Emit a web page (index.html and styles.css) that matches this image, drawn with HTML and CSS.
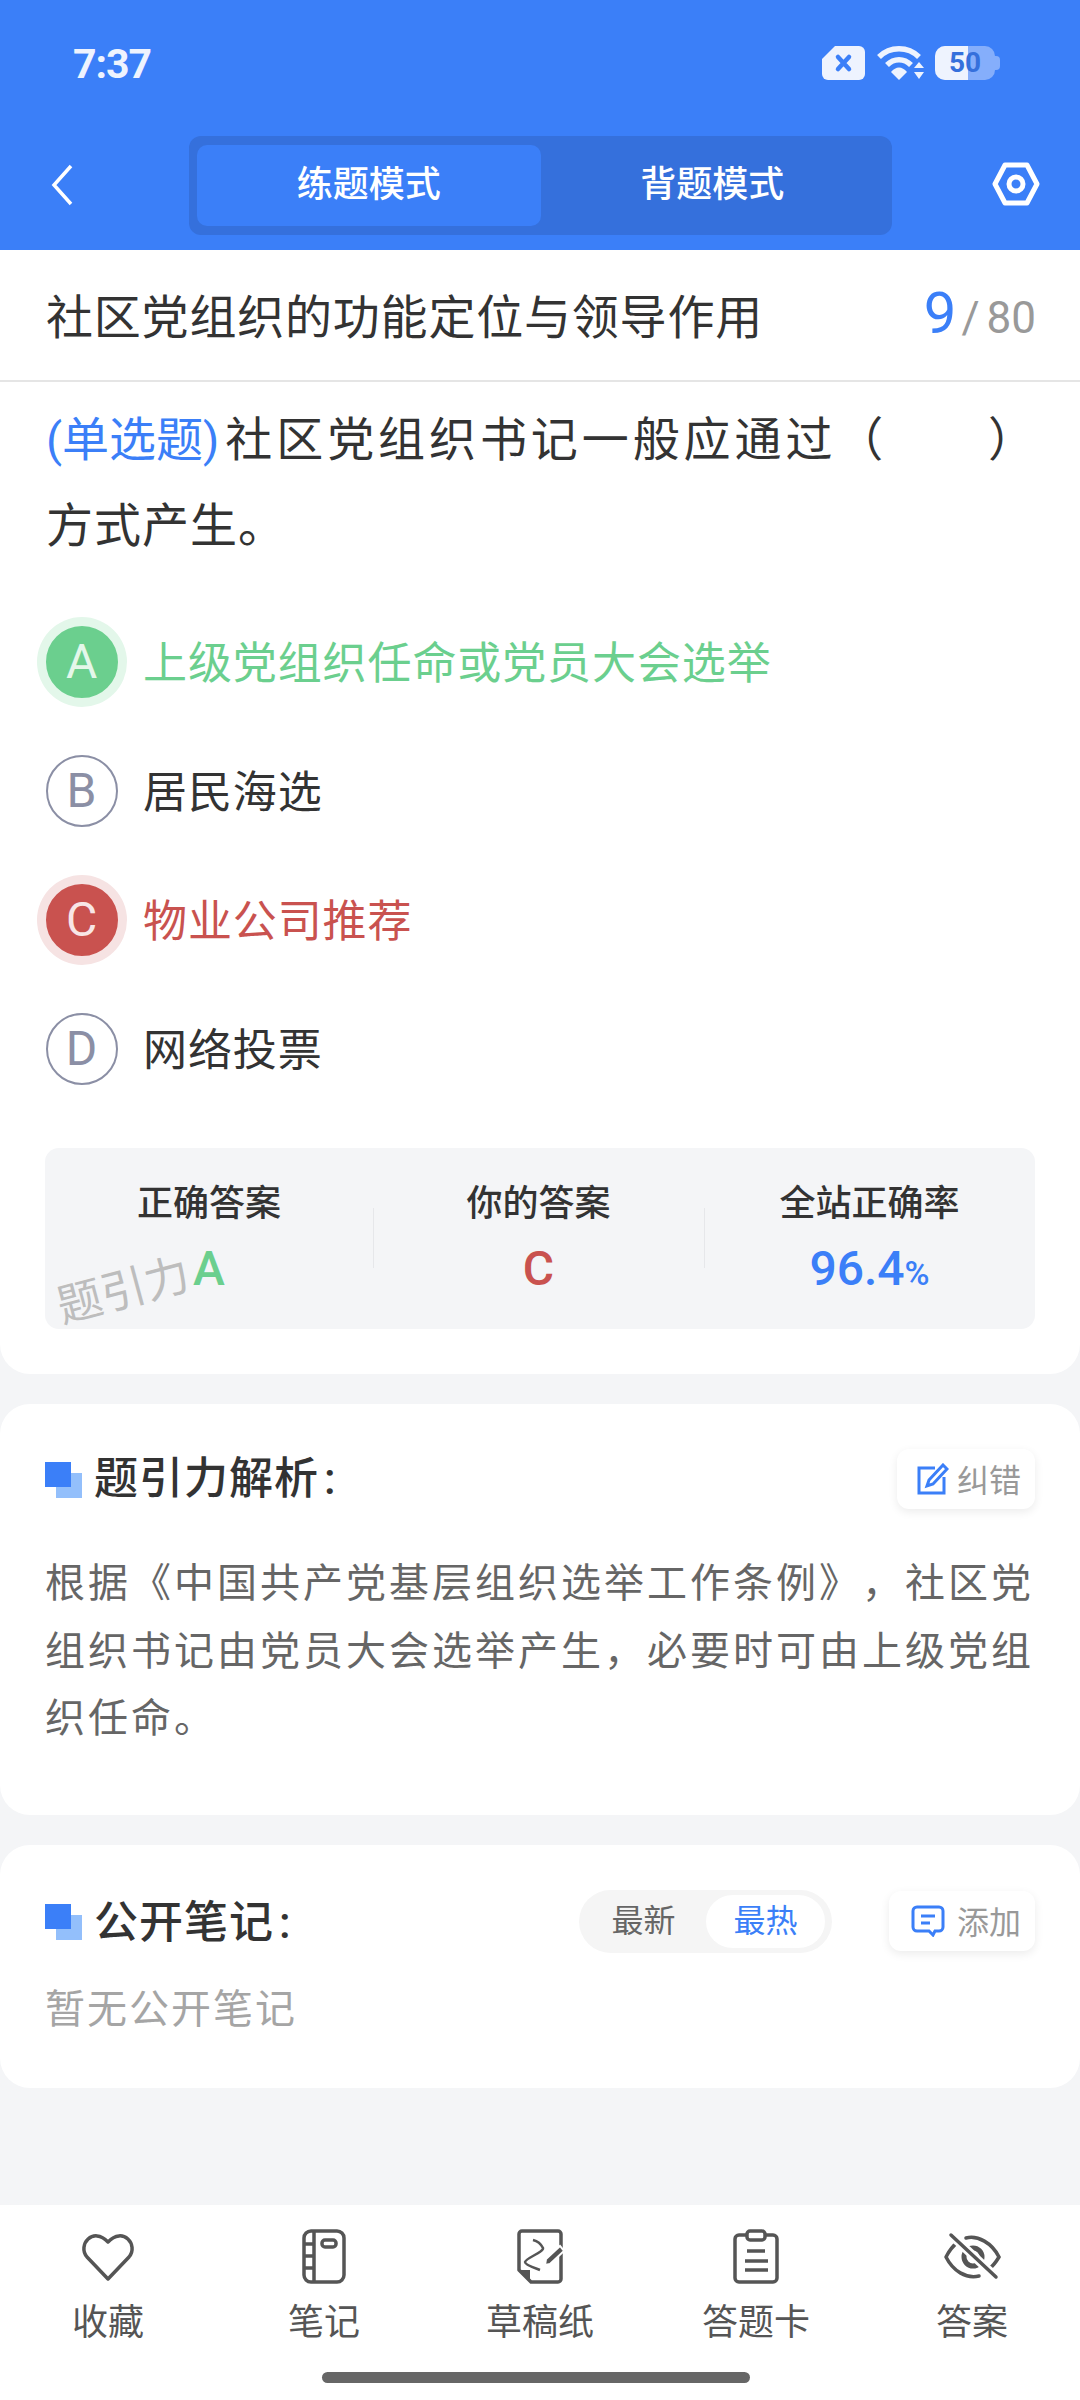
FILE: index.html
```html
<!DOCTYPE html>
<html>
    <head>
        <title>练题模式</title>
        <link rel="stylesheet" href="styles.css">
    </head>
    <body>
        <header class="header">
            <div class="status">
                <span class="time">7:37</span>
                <div class="status-icons">
                    <svg width="43" height="34" viewBox="0 0 43 34"><path d="M13 0H37a6 6 0 0 1 6 6V28a6 6 0 0 1-6 6H6a6 6 0 0 1-6-6V13z" fill="#eef3fe"/><path d="M16 11l11 12M27 11L16 23" stroke="#3b7ff8" stroke-width="4.5" stroke-linecap="round"/></svg>
                    <svg width="48" height="34" viewBox="0 0 48 34"><path d="M3 11C14 0 32 0 43 11" fill="none" stroke="#eef3fe" stroke-width="5.5"/><path d="M11 19c7-7 17-7 24 0" fill="none" stroke="#eef3fe" stroke-width="5.5"/><path d="M15 26c5-6 11-6 16 0l-8 8z" fill="#eef3fe"/><path d="M38 22l5-6 5 6zM38 26l5 7 5-7z" fill="#eef3fe"/></svg>
                    <div class="battery"><div class="battery-fill"></div><span class="battery-num">50</span></div>
                </div>
            </div>
            <div class="nav">
                <svg class="back" width="22" height="42" viewBox="0 0 22 42"><path d="M20 2L3 21l17 19" fill="none" stroke="#fff" stroke-width="3.5"/></svg>
                <div class="tabs">
                    <div class="tab active">练题模式</div>
                    <div class="tab">背题模式</div>
                </div>
                <svg class="hex" width="48" height="44" viewBox="0 0 48 44"><path d="M13 3H35L45 22 35 41H13L3 22z" fill="none" stroke="#fff" stroke-width="5" stroke-linejoin="round"/><circle cx="24" cy="22" r="7" fill="none" stroke="#fff" stroke-width="5"/></svg>
            </div>
        </header>

        <section class="card question-card">
            <div class="title-row">
                <span class="title">社区党组织的功能定位与领导作用</span>
                <span class="progress"><b>9</b><i>/</i>80</span>
            </div>
            <p class="question"><span class="qtype">(单选题)</span>社区党组织书记一般应通过（&emsp;&emsp;）方式产生。</p>
            <div class="options">
                <div class="option right"><span class="letter">A</span><span class="option-text">上级党组织任命或党员大会选举</span></div>
                <div class="option"><span class="letter">B</span><span class="option-text">居民海选</span></div>
                <div class="option wrong"><span class="letter">C</span><span class="option-text">物业公司推荐</span></div>
                <div class="option"><span class="letter">D</span><span class="option-text">网络投票</span></div>
            </div>
            <div class="stats">
                <div class="stat"><div class="stat-label">正确答案</div><div class="stat-value green">A</div></div>
                <div class="stat"><div class="stat-label">你的答案</div><div class="stat-value red">C</div></div>
                <div class="stat"><div class="stat-label">全站正确率</div><div class="stat-value blue">96.4<small>%</small></div></div>
                <div class="watermark">题引力</div>
            </div>
        </section>

        <section class="card analysis-card">
            <div class="card-head">
                <h3 class="heading"><span class="marker"></span>题引力解析<span class="colon">:</span></h3>
                <div class="pill-btn fix-btn">
                    <svg width="32" height="32" viewBox="0 0 32 32"><path d="M18 5H2V30H27V14" fill="none" stroke="#3b7ff8" stroke-width="3"/><path d="M26 2l4 4L16 21l-6 2 2-6z" fill="none" stroke="#3b7ff8" stroke-width="3"/></svg>
                    <span>纠错</span>
                </div>
            </div>
            <p class="analysis">根据《中国共产党基层组织选举工作条例》，社区党组织书记由党员大会选举产生，必要时可由上级党组织任命。</p>
        </section>

        <section class="card notes-card">
            <div class="card-head">
                <h3 class="heading"><span class="marker"></span>公开笔记<span class="colon">:</span></h3>
                <div class="head-right">
                    <div class="toggle">
                        <span class="toggle-item">最新</span>
                        <span class="toggle-item on">最热</span>
                    </div>
                    <div class="pill-btn add-btn">
                        <svg width="34" height="32" viewBox="0 0 34 32"><path d="M6 2H28a4 4 0 0 1 4 4V22a4 4 0 0 1-4 4H24l-2 4-4-4H6a4 4 0 0 1-4-4V6a4 4 0 0 1 4-4z" fill="none" stroke="#3b7ff8" stroke-width="3"/><path d="M10 11H24M10 18H19" stroke="#3b7ff8" stroke-width="3"/></svg>
                        <span>添加</span>
                    </div>
                </div>
            </div>
            <p class="empty">暂无公开笔记</p>
        </section>

        <nav class="bottom">
            <div class="bottom-item">
                <svg width="60" height="56" viewBox="0 0 60 56"><path d="M30 50L9 28C-1 16 15-3 30 13 45-3 61 16 51 28z" fill="none" stroke="#555" stroke-width="3.5" stroke-linejoin="round"/></svg>
                <span>收藏</span>
            </div>
            <div class="bottom-item">
                <svg width="60" height="56" viewBox="0 0 60 56"><rect x="10" y="2" width="40" height="51" rx="7" fill="none" stroke="#555" stroke-width="3.5"/><path d="M20 2V53M10 15H20M10 27H20M10 39H20" fill="none" stroke="#555" stroke-width="3.5"/><rect x="28" y="11" width="14" height="7" rx="3" fill="none" stroke="#555" stroke-width="3.5"/></svg>
                <span>笔记</span>
            </div>
            <div class="bottom-item">
                <svg width="60" height="56" viewBox="0 0 60 56"><path d="M12 2H48a3 3 0 0 1 3 3V50a3 3 0 0 1-3 3H21L9 41V5a3 3 0 0 1 3-3z" fill="none" stroke="#555" stroke-width="3.5" stroke-linejoin="round"/><path d="M10 41h10v11z" fill="#555"/><path d="M23 11c4 1 8 4 10 8 1 4-17 10-18 14 0 3 10 6 15 8" fill="none" stroke="#555" stroke-width="2.5"/><path d="M36 30L50 17l4 5-14 13-5 1z" fill="#555" stroke="#fff" stroke-width="2"/></svg>
                <span>草稿纸</span>
            </div>
            <div class="bottom-item">
                <svg width="60" height="56" viewBox="0 0 60 56"><path d="M21 6H13a4 4 0 0 0-4 4V49a4 4 0 0 0 4 4H47a4 4 0 0 0 4-4V10a4 4 0 0 0-4-4H39" fill="none" stroke="#555" stroke-width="3.5"/><rect x="21" y="2" width="18" height="9" rx="3" fill="none" stroke="#555" stroke-width="3.5"/><path d="M21 22H39M19 32H42M19 41H42" stroke="#555" stroke-width="3.5"/></svg>
                <span>答题卡</span>
            </div>
            <div class="bottom-item">
                <svg width="60" height="56" viewBox="0 0 60 56"><path d="M4 28C8 20 12 16 16 13M24 9C36 6 50 14 57 28 54 33 51 37 47 40M37 47C24 50 11 42 4 28" fill="none" stroke="#555" stroke-width="3.5" stroke-linecap="round"/><circle cx="31" cy="28" r="9" fill="none" stroke="#555" stroke-width="5"/><path d="M9 6L54 48" stroke="#fff" stroke-width="9"/><path d="M9 6L54 48" stroke="#555" stroke-width="3.5" stroke-linecap="round"/></svg>
                <span>答案</span>
            </div>
            <div class="home-bar"></div>
        </nav>
    </body>
</html>
```

FILE: styles.css
```css
* {
    box-sizing: border-box;
}
body {
    width: 1080px;
    height: 2400px;
    margin: 0;
    overflow: hidden;
    display: flex;
    flex-direction: column;
    background-color: #f4f5f7;
    color: #333;
    font-family: Roboto, "Noto Sans CJK SC", sans-serif;
    text-spacing-trim: space-all;
}
p, h3 {
    margin: 0;
}

/* header */
.header {
    height: 250px;
    background-color: #3b7ff8;
    color: #fff;
}
.status {
    height: 136px;
    padding: 46px 85px 0 73px;
    display: flex;
    justify-content: space-between;
    align-items: flex-start;
}
.time {
    margin-top: 1px;
    font-size: 41px;
    line-height: 34px;
    font-weight: 700;
    letter-spacing: -1px;
    color: #eef3fe;
}
.status-icons {
    display: flex;
    gap: 11px;
}
.battery {
    position: relative;
    width: 60px;
    height: 34px;
    border-radius: 10px;
    background-color: #85aefb;
    text-align: center;
}
.battery::after {
    content: "";
    position: absolute;
    right: -5px;
    top: 10px;
    width: 5px;
    height: 14px;
    border-radius: 0 4px 4px 0;
    background-color: #85aefb;
}
.battery-fill {
    position: absolute;
    left: 0;
    top: 0;
    width: 33px;
    height: 34px;
    border-radius: 10px 0 0 10px;
    background-color: #eef3fe;
}
.battery-num {
    position: relative;
    display: block;
    font-size: 28px;
    line-height: 34px;
    font-weight: 700;
    color: #3570dc;
}
.nav {
    height: 114px;
    padding-left: 51px;
    display: flex;
    align-items: center;
}
.back {
    margin-top: -17px;
}
.tabs {
    width: 703px;
    height: 99px;
    margin: -15px 0 0 116px;
    padding: 9px 8px 9px 8px;
    display: flex;
    background-color: #3570dc;
    border-radius: 12px;
}
.tab {
    flex: 1;
    font-size: 36px;
    line-height: 81px;
    font-weight: 500;
    text-align: center;
    border-radius: 10px;
}
.tab.active {
    background-color: #3b7ff8;
}
.hex {
    margin: -18px 0 0 100px;
}

/* cards */
.card {
    background-color: #fff;
    border-radius: 30px;
}
.question-card {
    height: 1124px;
    border-radius: 0 0 30px 30px;
}
.title-row {
    height: 132px;
    padding: 0 44px 4px 46px;
    display: flex;
    justify-content: space-between;
    align-items: center;
    border-bottom: 2px solid #e5e5e5;
}
.title {
    font-size: 47px;
    letter-spacing: 0.8px;
}
.progress {
    font-size: 44px;
    color: #999;
}
.progress b {
    font-size: 58px;
    font-weight: 400;
    color: #3b7ff8;
}
.progress i {
    font-style: normal;
    margin: 0 7px 0 5px;
}
.question {
    padding: 15px 44px 0 46px;
    font-size: 47px;
    line-height: 86px;
    letter-spacing: 1px;
    text-align: justify;
}
.qtype {
    display: inline-block;
    color: #3b7ff8;
    letter-spacing: 0;
    margin-right: 3px;
}
.options {
    margin-top: 28px;
}
.option {
    height: 129px;
    padding-left: 46px;
    display: flex;
    align-items: center;
    gap: 25px;
    font-size: 44px;
    letter-spacing: 0.9px;
}
.option-text {
    margin-top: -3px;
}
.letter {
    width: 72px;
    height: 72px;
    border: 2px solid #8b8fa5;
    border-radius: 50%;
    display: flex;
    justify-content: center;
    align-items: center;
    font-size: 48px;
    color: #8b8fa5;
}
.right {
    color: #6bcf8e;
}
.right .letter {
    background-color: #6bcf8e;
    border-color: #6bcf8e;
    color: #e4f7ea;
    box-shadow: 0 0 0 9px #e3f7ea;
}
.wrong {
    color: #c9524f;
}
.wrong .letter {
    background-color: #c9524f;
    border-color: #c9524f;
    color: #f8e6e6;
    box-shadow: 0 0 0 9px #f6e3e3;
}

/* answer stats */
.stats {
    position: relative;
    height: 181px;
    margin: 35px 45px 0;
    display: flex;
    background-color: #f4f5f7;
    border-radius: 14px;
}
.stat {
    flex: 1;
    padding-top: 33px;
    text-align: center;
    position: relative;
}
.stat:first-child {
    flex: none;
    width: 328px;
}
.stat + .stat::before {
    content: "";
    position: absolute;
    left: 0;
    top: 60px;
    height: 60px;
    border-left: 1px solid #e6e7ea;
}
.stat-label {
    font-size: 36px;
    line-height: 46px;
    font-weight: 500;
}
.stat-value {
    margin-top: 14px;
    font-size: 48px;
    line-height: 56px;
    font-weight: 500;
}
.stat-value small {
    font-size: 34px;
}
.green {
    color: #6bcf8e;
}
.red {
    color: #c9524f;
}
.blue {
    color: #3b7ff8;
}
.watermark {
    position: absolute;
    left: 11px;
    top: 118px;
    font-size: 45px;
    line-height: 50px;
    color: #bdbdbd;
    transform: rotate(-15deg);
}

/* analysis and notes */
.analysis-card {
    height: 411px;
    margin-top: 30px;
    padding: 45px 45px 0;
}
.notes-card {
    height: 243px;
    margin-top: 30px;
    padding: 46px 45px 0;
}
.card-head {
    display: flex;
    justify-content: space-between;
    align-items: center;
    height: 60px;
}
.heading {
    display: flex;
    align-items: center;
    height: 60px;
    font-size: 44px;
    line-height: 54px;
    font-weight: 500;
    letter-spacing: 1px;
}
.notes-card .heading {
    padding-top: 4px;
}
.colon {
    margin-left: 5px;
}
.marker {
    position: relative;
    width: 37px;
    height: 36px;
    margin-right: 12px;
    margin-top: 2px;
}
.notes-card .marker {
    margin-top: -2px;
}
.marker::before {
    content: "";
    position: absolute;
    left: 11px;
    top: 11px;
    width: 26px;
    height: 25px;
    background-color: #93bffb;
}
.marker::after {
    content: "";
    position: absolute;
    left: 0;
    top: 0;
    width: 26px;
    height: 25px;
    background-color: #3b7ff8;
}
.pill-btn {
    height: 60px;
    display: flex;
    align-items: center;
    border-radius: 12px;
    background-color: #fff;
    box-shadow: 0 3px 10px rgba(0, 0, 0, 0.08);
    font-size: 32px;
    color: #999;
}
.fix-btn {
    padding: 0 14px 0 20px;
    gap: 8px;
}
.add-btn {
    padding: 0 14px 0 22px;
    gap: 12px;
}
.pill-btn span {
    margin-top: -3px;
}
.head-right {
    display: flex;
    align-items: center;
    gap: 57px;
}
.toggle {
    width: 253px;
    height: 63px;
    padding: 5px 7px 5px 2px;
    display: flex;
    align-items: center;
    background-color: #f5f5f5;
    border-radius: 32px;
    font-size: 32px;
    color: #666;
}
.toggle-item {
    flex: 1;
    line-height: 53px;
    text-align: center;
    border-radius: 27px;
}
.toggle-item.on {
    flex: none;
    width: 119px;
    background-color: #fff;
    color: #3b7ff8;
}
.analysis {
    margin-top: 41px;
    font-size: 40px;
    line-height: 67.5px;
    letter-spacing: 3px;
    color: #666;
}
.empty {
    margin-top: 30px;
    font-size: 40px;
    line-height: 58px;
    letter-spacing: 2px;
    color: #a5a5a5;
}

/* bottom bar */
.bottom {
    position: relative;
    height: 195px;
    margin-top: auto;
    padding-top: 24px;
    display: flex;
    background-color: #fff;
}
.bottom-item {
    width: 216px;
    display: flex;
    flex-direction: column;
    align-items: center;
    font-size: 36px;
    line-height: 46px;
    color: #555;
    gap: 15px;
}
.home-bar {
    position: absolute;
    left: 322px;
    bottom: 17px;
    width: 428px;
    height: 11px;
    border-radius: 6px;
    background-color: #666;
}
```
